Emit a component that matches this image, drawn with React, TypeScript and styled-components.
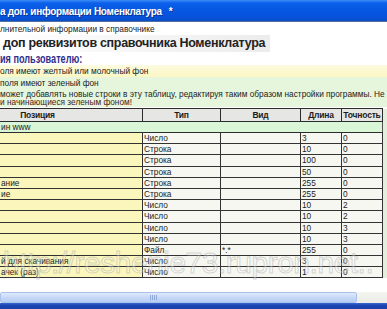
import styled, { createGlobalStyle } from "styled-components"

const GlobalStyle = createGlobalStyle`
  html, body {
    margin: 0;
    padding: 0;
    background: #fff;
    overflow: hidden;
  }
  body {
    font-family: "Liberation Sans", Arial, sans-serif;
  }
`

type Tone = "yellow" | "plain" | "green"

type Row = {
  pos: string
  type: string
  kind: string
  len: string
  prec: string
}

const rows: Row[] = [
  { pos: "", type: "Число", kind: "", len: "3", prec: "0" },
  { pos: "", type: "Строка", kind: "", len: "10", prec: "0" },
  { pos: "", type: "Строка", kind: "", len: "100", prec: "0" },
  { pos: "", type: "Строка", kind: "", len: "50", prec: "0" },
  { pos: "ание", type: "Строка", kind: "", len: "255", prec: "0" },
  { pos: "ие", type: "Строка", kind: "", len: "255", prec: "0" },
  { pos: "", type: "Число", kind: "", len: "10", prec: "2" },
  { pos: "", type: "Число", kind: "", len: "10", prec: "2" },
  { pos: "", type: "Число", kind: "", len: "10", prec: "3" },
  { pos: "", type: "Число", kind: "", len: "10", prec: "3" },
  { pos: "", type: "Файл", kind: "*.*", len: "255", prec: "0" },
  { pos: "й для скачивания", type: "Число", kind: "", len: "3", prec: "0" },
  { pos: "ачек (раз)", type: "Число", kind: "", len: "1", prec: "0" },
]

export default function App() {
  return (
    <>
      <GlobalStyle />
      <Window>
        <TitleBar>
          <span>а доп. информации Номенклатура</span>
          <span>*</span>
        </TitleBar>
        <TabLabel>лнительной информации в справочнике</TabLabel>
        <Heading>доп реквизитов справочника Номенклатура</Heading>
        <SubHeading>
          <span>ия пользователю:</span>
        </SubHeading>
        <Note $tone="yellow">оля имеют желтый или молочный фон</Note>
        <Note $tone="green">поля имеют зеленый фон</Note>
        <Note $tone="green" $multi>
          <span>может добавлять новые строки в эту таблицу, редактируя таким образом настройки программы. Не</span>
          <Warn>и начинающиеся зеленым фоном!</Warn>
        </Note>

        <Grid>
          <colgroup>
            <col style={{ width: 210 }} />
            <col style={{ width: 78 }} />
            <col style={{ width: 80 }} />
            <col style={{ width: 41 }} />
            <col style={{ width: 41 }} />
            <col style={{ width: 40 }} />
          </colgroup>
          <thead>
            <tr>
              <HeadCell>Позиция</HeadCell>
              <HeadCell>Тип</HeadCell>
              <HeadCell>Вид</HeadCell>
              <HeadCell>Длина</HeadCell>
              <HeadCell>Точность</HeadCell>
              <SideCell />
            </tr>
          </thead>
          <tbody>
            <tr>
              <GroupCell colSpan={5}>ин www</GroupCell>
              <SideCell />
            </tr>
            {rows.map((r, i) => (
              <tr key={i}>
                <Cell $tone="yellow" $pos>{r.pos}</Cell>
                <Cell $tone="plain">{r.type}</Cell>
                <Cell $tone="plain">{r.kind}</Cell>
                <Cell $tone="plain">{r.len}</Cell>
                <Cell $tone="plain">{r.prec}</Cell>
                <SideCell />
              </tr>
            ))}
          </tbody>
        </Grid>

        <Scrollbar>
          <Thumb>
            <Grip />
          </Thumb>
          <Track />
        </Scrollbar>
        <Taskbar />

        <Watermark>http://reshenie73.rupron.net..</Watermark>
      </Window>
    </>
  )
}

const Window = styled.div`
  position: relative;
  width: 387px;
  height: 309px;
  display: flex;
  flex-direction: column;
  overflow: hidden;
  background: #fff;
`

const TitleBar = styled.div`
  flex: 0 0 22px;
  display: flex;
  align-items: center;
  gap: 7px;
  padding-top: 2px;
  box-sizing: border-box;
  background: linear-gradient(#3d8ef8 0, #0c60ea 3px, #0657e2 45%, #0653dc 80%, #0a4cc6 100%);
  border-bottom: 1px solid #52719e;
  color: #fff;
  font-size: 10px;
  font-weight: bold;
  letter-spacing: -0.3px;
  white-space: nowrap;
  text-shadow: 1px 1px 0 #0b3190;
`

const TabLabel = styled.div`
  flex: 0 0 12px;
  font-size: 8.3px;
  line-height: 12px;
  padding-top: 1px;
  color: #222;
  white-space: nowrap;
`

const Heading = styled.h1`
  margin: 0;
  flex: 0 0 17px;
  width: 270px;
  padding-left: 3px;
  box-sizing: border-box;
  font-size: 12.5px;
  font-weight: bold;
  letter-spacing: -0.3px;
  line-height: 17px;
  color: #222;
  white-space: nowrap;
  background: linear-gradient(90deg, #fff 0%, #f6f6f6 50%, #ececec 100%);
`

const SubHeading = styled.div`
  flex: 0 0 11px;
  line-height: 11px;
  white-space: nowrap;

  span {
    display: inline-block;
    font-size: 12px;
    font-weight: bold;
    color: #2f2f8c;
    transform: scaleX(0.76);
    transform-origin: left center;
  }
`

const Note = styled.div<{ $tone: Tone; $multi?: boolean }>`
  display: flex;
  flex-direction: column;
  justify-content: center;
  flex: 0 0 ${({ $multi }) => ($multi ? "18px" : "12px")};
  font-size: 8.3px;
  line-height: 8.5px;
  color: #222;
  white-space: nowrap;
  background: ${({ $tone }) =>
    $tone === "yellow"
      ? "linear-gradient(#fdfbe0, #fbf6c2)"
      : "#e5f6dc"};
`

const Warn = styled.span`
  color: #4a1818;
`

const Grid = styled.table`
  margin-left: -68px;
  margin-top: 1px;
  border-collapse: collapse;
  table-layout: fixed;
  width: 490px;
  font-size: 8.3px;
  color: #1c1c1c;
`

const HeadCell = styled.th`
  height: 12px;
  padding: 0;
  background: #e6e6e4;
  border: 1px solid #2c2c2c;
  font-size: 8.5px;
  font-weight: bold;
  letter-spacing: -0.2px;
  text-align: center;
  line-height: 12px;
  white-space: nowrap;
  overflow: hidden;
`

const GroupCell = styled.td`
  height: 10px;
  padding: 0 0 0 68px;
  background: #d9f6d6;
  border: 1px solid #2c2c2c;
  border-right-color: #555;
  line-height: 10px;
  white-space: nowrap;
  overflow: hidden;
`

const Cell = styled.td<{ $tone: Tone; $pos?: boolean }>`
  height: 10.2px;
  padding: ${({ $pos }) => ($pos ? "0 0 0 68px" : "0 1px")};
  border: 1px solid #333;
  background: ${({ $tone }) => ($tone === "yellow" ? "#faf6bc" : "#f7f7f1")};
  line-height: 10px;
  white-space: nowrap;
  overflow: hidden;
`

const SideCell = styled.td`
  padding: 0;
  background: #e3eedc;
  border: 1px solid #2c2c2c;
  border-right: none;
  border-top: none;
  border-bottom: none;
`

const Scrollbar = styled.div`
  margin-top: auto;
  flex: 0 0 11px;
  display: flex;
`

const Thumb = styled.div`
  flex: 0 0 357px;
  display: flex;
  justify-content: center;
  align-items: center;
  box-sizing: border-box;
  padding-right: 50px;
  background: linear-gradient(#dfe9fb, #c4d6f6 60%, #b7cdf3);
  border: 1px solid #aac1ec;
  border-radius: 2px;
`

const Grip = styled.div`
  width: 7px;
  height: 5px;
  background: repeating-linear-gradient(90deg, #8ea8d8 0 1px, transparent 1px 2px);
`

const Track = styled.div`
  flex: 1;
  background: linear-gradient(#f4f4f0, #ecece6);
`

const Taskbar = styled.div`
  flex: 0 0 6px;
  background: linear-gradient(#3a68d0, #1c45b4 40%, #1a3fa8);
`

const Watermark = styled.div`
  position: absolute;
  left: 3px;
  top: 246px;
  font-size: 30px;
  letter-spacing: -0.5px;
  white-space: nowrap;
  color: rgba(255, 255, 255, 0.3);
  -webkit-text-stroke: 1px rgba(140, 140, 140, 0.35);
  pointer-events: none;
`
